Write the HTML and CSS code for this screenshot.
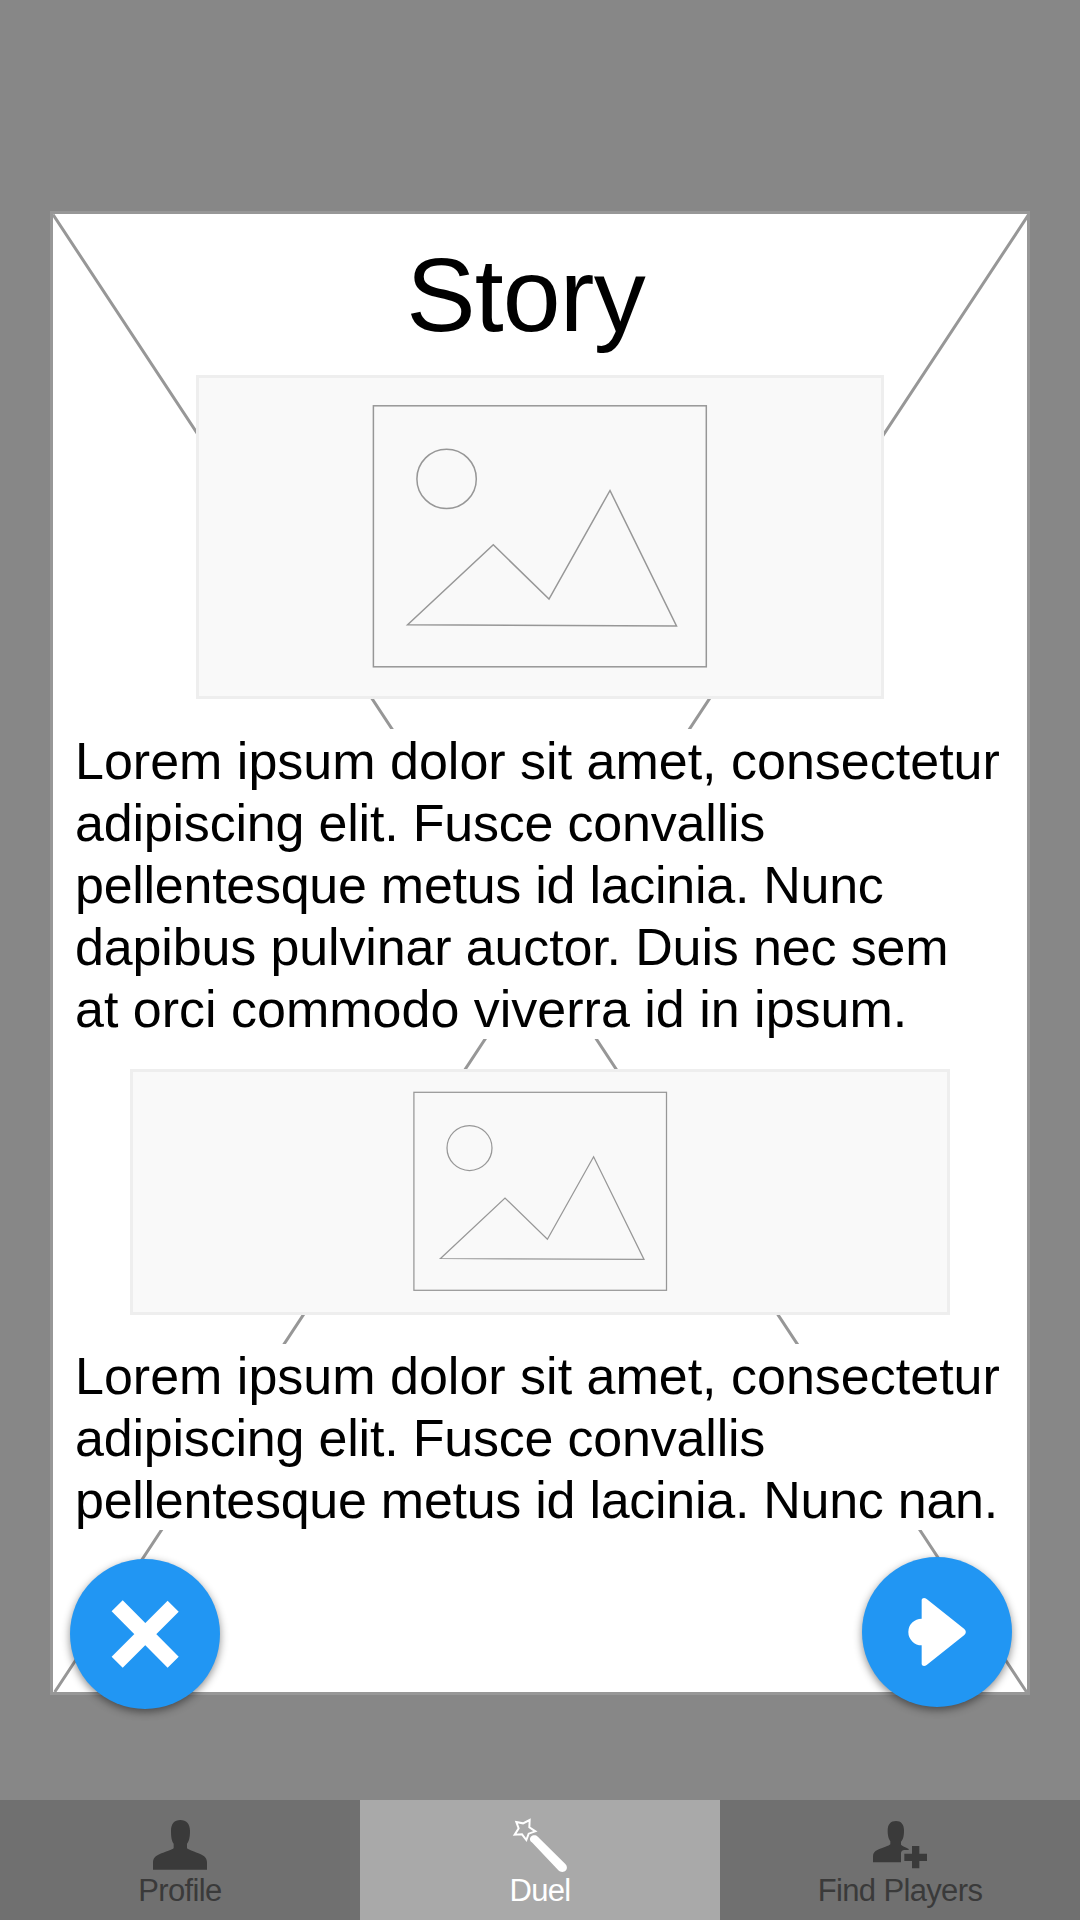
FILE: index.html
```html
<!DOCTYPE html>
<html lang="en">
<head>
<meta charset="utf-8">
<title>Story</title>
<link rel="stylesheet" href="styles.css">
</head>
<body>
<div class="screen">
  <main class="stage">
    <section class="card">
      <svg class="card-cross" viewBox="0 0 974 1478" preserveAspectRatio="none" aria-hidden="true">
        <path d="M0 0.500L973.600 1478M976 0L1.700 1478"/>
      </svg>
      <h1 class="title">Story</h1>
      <div class="image image-large">
        <svg viewBox="196 375 688 324" aria-hidden="true">
          <rect x="373.4" y="405.8" width="332.9" height="261"/>
          <circle cx="446.6" cy="478.9" r="29.7"/>
          <path d="M407.6 624.8L493.3 544.8L549 599L610 490.5L676.5 626Z"/>
        </svg>
      </div>
      <p class="text"><span>Lorem ipsum dolor sit amet, consectetur</span><br><span class="snug">adipiscing elit. Fusce convallis</span><br><span class="tight">pellentesque metus id lacinia. Nunc</span><br><span class="close">dapibus pulvinar auctor. Duis nec sem</span><br><span>at orci commodo viverra id in ipsum.</span></p>
      <div class="image image-small">
        <svg viewBox="130 1069 820 246" aria-hidden="true">
          <rect x="413.9" y="1092.3" width="252.6" height="198"/>
          <circle cx="469.5" cy="1148" r="22.5"/>
          <path d="M440.5 1258.5L505 1198L547.4 1239.2L593.6 1156.8L644 1259.4Z"/>
        </svg>
      </div>
      <p class="text text-last"><span>Lorem ipsum dolor sit amet, consectetur</span><br><span class="snug">adipiscing elit. Fusce convallis</span><br><span class="tight">pellentesque metus id lacinia. Nunc nan.</span></p>
      <button class="fab fab-close" aria-label="Close">
        <svg viewBox="90 177 450 450"><path d="M231.500 317.500L399.500 486.500M399.500 318.500L231.500 486.500"/></svg>
      </button>
      <button class="fab fab-next" aria-label="Next">
        <svg viewBox="126 171 450 450"><path d="M305 299Q306 294 312 294Q316 294 320 297L433 387Q442 396 433 405L320 495Q316 498 312 498Q306 498 305 493V436A40 40 0 0 1 305 356Z"/></svg>
      </button>
    </section>
  </main>
  <nav class="tabs">
    <a class="tab">
      <svg class="tab-icon" viewBox="159 75 162 171" aria-hidden="true"><path d="M241 90C259 90 270 102 270 122C270 142 267 153 261 161V174C263 179 285 185 302 193C314 198 321 205 321 218V239H159V218C159 205 166 198 178 193C195 185 219 179 221 174V161C215 153 213 142 213 122C213 102 223 90 241 90Z"/></svg>
      <span>Profile</span>
    </a>
    <a class="tab tab-active">
      <svg class="tab-icon" viewBox="1239 75 162 171" aria-hidden="true"><path class="star" d="M1249 96L1269 100L1289 90L1288 112L1306 124L1286 131L1279 150L1266 133L1244 134L1256 115Z"/><path d="M1290 149C1289 141 1297 134 1306 136C1310 137 1313 140 1318 145L1396 222C1402 228 1402 236 1398 241C1392 248 1381 247 1375 241L1297 158C1293 155 1291 153 1290 149Z"/></svg>
      <span>Duel</span>
    </a>
    <a class="tab">
      <svg class="tab-icon" viewBox="279 75 162 171" aria-hidden="true"><path d="M348 93C363 93 372 103 372 121C372 140 369 148 363 155V164C366 168 377 171 386 177V180H373C367 180 363 184 363 190V217H279V199C279 189 284 184 292 180C308 172 328 168 331 163V154C326 147 323 138 323 121C323 103 332 93 348 93ZM396 168H418V191H441V213H418V235H396V213H373V191H396Z"/></svg>
      <span>Find Players</span>
    </a>
  </nav>
</div>
</body>
</html>
```
FILE: styles.css
```css
* {
  box-sizing: border-box;
}

body {
  margin: 0;
  font-family: "Liberation Sans", Arial, Helvetica, sans-serif;
}

.screen {
  display: flex;
  flex-direction: column;
  width: 1080px;
  height: 1920px;
  background: #878787;
  overflow: hidden;
}

.stage {
  flex: 1;
  padding: 211px 50px 0;
}

.card {
  position: relative;
  display: flex;
  flex-direction: column;
  align-items: center;
  height: 1484px;
  border: 3px solid #979797;
  background: #fff;
  color: #000;
}

.card-cross {
  position: absolute;
  inset: 0;
  width: 100%;
  height: 100%;
  fill: none;
  stroke: #979797;
  stroke-width: 3;
}

.title {
  position: relative;
  height: 161px;
  margin: 0;
  padding: 21px 29px 0 0;
  font-size: 104px;
  font-weight: 400;
  line-height: 120px;
  letter-spacing: -0.8px;
}

.image {
  position: relative;
  border: 3px solid #eee;
  background: #f9f9f9;
}

.image svg {
  display: block;
  margin: -3px;
  width: calc(100% + 6px);
  height: calc(100% + 6px);
  fill: none;
  stroke: #979797;
  stroke-width: 1.5;
}

.image-large {
  width: 688px;
  height: 324px;
}

.image-small {
  width: 820px;
  height: 246px;
}

.image-small svg {
  stroke-width: 1.25;
}

.text {
  position: relative;
  align-self: flex-start;
  width: 932px;
  height: 310px;
  margin: 30px 0 30px 22px;
  padding-top: 1px;
  background: #fff;
  font-size: 52px;
  line-height: 62px;
  white-space: nowrap;
}

.text-last {
  height: 186px;
  margin-top: 29px;
}

.snug {
  letter-spacing: -0.2px;
}

.tight {
  letter-spacing: -0.27px;
}

.close {
  letter-spacing: -0.14px;
}

.fab {
  position: absolute;
  width: 150px;
  height: 150px;
  padding: 0;
  border: 0;
  border-radius: 50%;
  background: #2196f3;
  box-shadow: 0 3px 9px rgba(0, 0, 0, 0.45);
}

.fab svg {
  display: block;
  width: 150px;
  height: 150px;
  fill: #fff;
}

.fab-close {
  left: 17px;
  top: 1345px;
}

.fab-close svg {
  fill: none;
  stroke: #fff;
  stroke-width: 47;
}

.fab-next {
  right: 15px;
  top: 1343px;
}

.tabs {
  display: flex;
  height: 120px;
}

.tab {
  flex: 1;
  display: flex;
  flex-direction: column;
  align-items: center;
  padding-top: 15px;
  background: #707070;
  color: #3a3a3a;
  font-size: 31px;
  line-height: 38px;
  letter-spacing: -0.65px;
}

.tab-active {
  background: #a9a9a9;
  color: #fff;
}

.tab-icon {
  width: 54px;
  height: 57px;
  overflow: visible;
  fill: currentColor;
}

.tab-icon .star {
  fill: none;
  stroke: currentColor;
  stroke-width: 6;
}
```
